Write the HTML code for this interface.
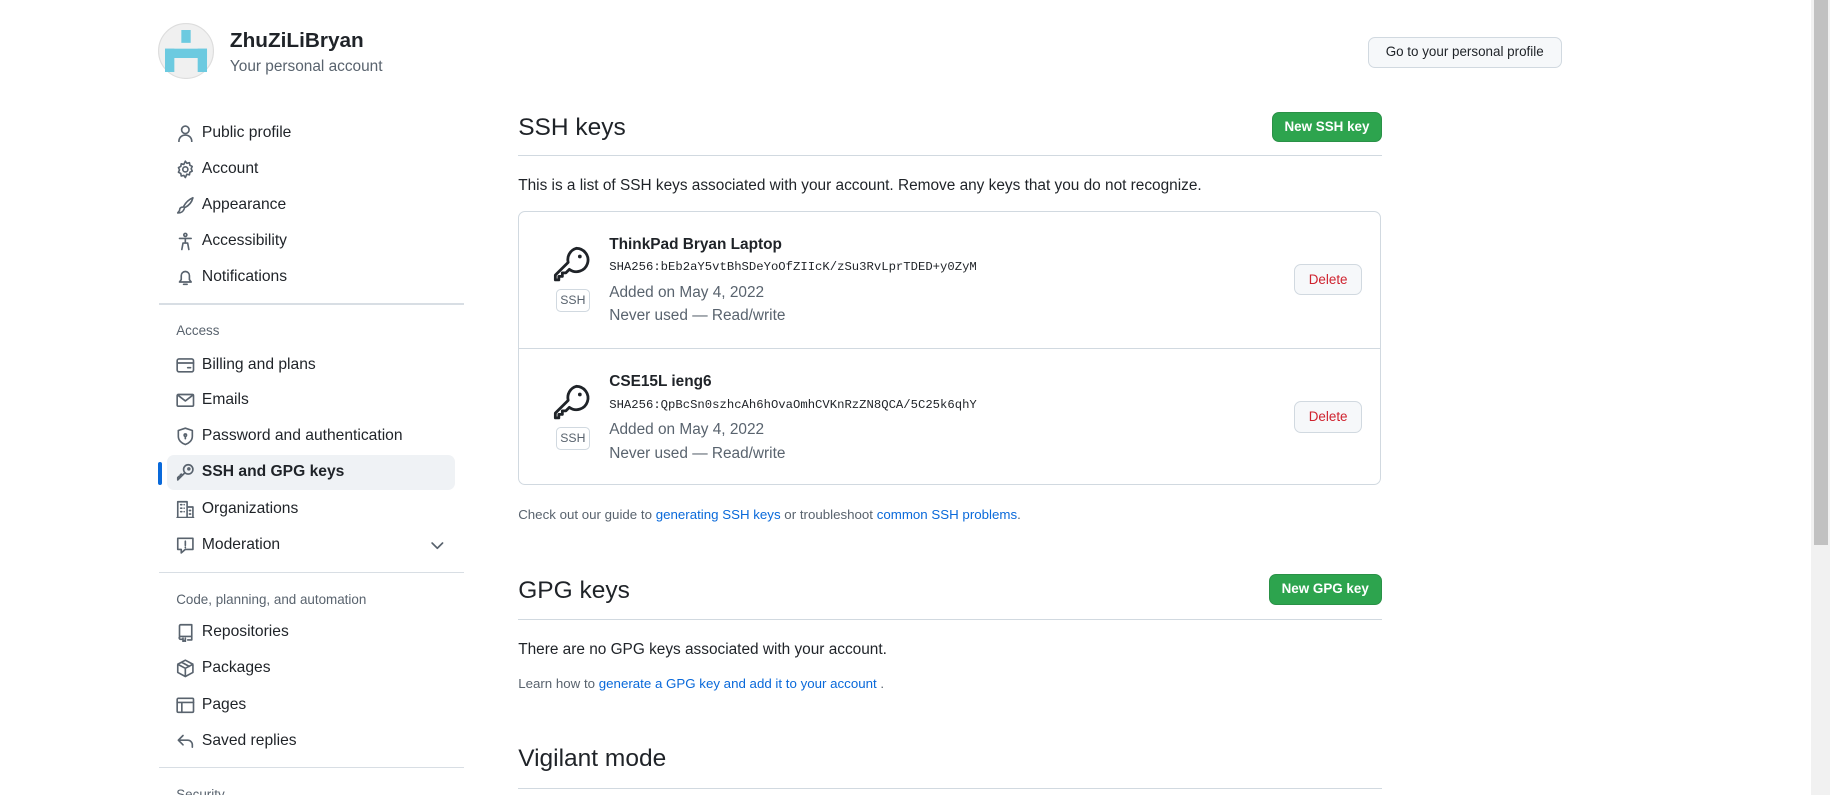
<!DOCTYPE html>
<html><head><meta charset="utf-8"><style>
html,body{margin:0;padding:0;background:#fff;overflow:hidden}
body{width:1830px;height:795px}
#r{zoom:1.16709;width:1568px;height:681px;position:relative;font-family:"Liberation Sans",sans-serif;color:#1f2328}
.a{position:absolute;white-space:nowrap}
.ic{position:absolute;width:16px;height:16px;fill:none;stroke:#59636e;stroke-width:1.4;stroke-linecap:round;stroke-linejoin:round}
.it{position:absolute;left:173px;font-size:13.4px;line-height:16px}
.sep{position:absolute;left:136px;width:262px;height:1px;background:#d8dee4}
.hd{position:absolute;left:151px;font-size:11.5px;color:#59636e}
.btn{position:absolute;border:1px solid #d1d9e0;border-radius:6px;background:#f6f8fa;font-size:11.5px;text-align:center;box-sizing:border-box}
.g{position:absolute;background:#2da44e;border:1px solid #2a9147;color:#fff;font-weight:bold;font-size:11.5px;border-radius:6px;text-align:center;box-sizing:border-box}
.h2{position:absolute;left:444px;font-size:21px;line-height:28px}
.ln{position:absolute;left:444px;width:740px;height:1px;background:#d1d9e0}
.t{font-size:13.2px}
.mono{font-family:"Liberation Mono",monospace;font-size:10.5px}
a{color:#0969da;text-decoration:none}
</style></head><body><div id="r">
<svg class="a" style="left:135px;top:20px" width="48" height="48" viewBox="0 0 48 48"><circle cx="24" cy="24" r="23.5" fill="#f0f0f0" stroke="#ddd"/><rect x="20" y="6" width="8" height="11" fill="#6ccae0"/><rect x="6" y="22" width="36" height="8" fill="#6ccae0"/><rect x="6" y="22" width="8" height="20" fill="#6ccae0"/><rect x="34" y="22" width="8" height="20" fill="#6ccae0"/></svg>
<div class="a" style="left:197px;top:25px;font-size:17.8px;font-weight:bold">ZhuZiLiBryan</div>
<div class="a" style="left:197px;top:50px;font-size:13.2px;color:#59636e">Your personal account</div>
<div class="btn" style="left:1172px;top:32px;width:166px;height:26px;line-height:24px">Go to your personal profile</div>

<svg class="ic" style="left:151px;top:106px" viewBox="0 0 16 16"><circle cx="8" cy="5" r="3.2"/><path d="M2.5 15c0-3.5 2.5-5.5 5.5-5.5s5.5 2 5.5 5.5"/></svg>
<div class="it" style="top:106px">Public profile</div>
<svg class="ic" style="left:151px;top:137px" viewBox="0 0 16 16"><circle cx="8" cy="8" r="2.2"/><path d="M8 1l1.3 1.8 2.2-.5.4 2.2 2 1-.9 2 .9 2-2 1-.4 2.2-2.2-.5L8 15l-1.3-1.8-2.2.5-.4-2.2-2-1 .9-2-.9-2 2-1 .4-2.2 2.2.5z"/></svg>
<div class="it" style="top:137px">Account</div>
<svg class="ic" style="left:151px;top:168px" viewBox="0 0 16 16"><path d="M14.5 1.5C11 3 8 6 6.5 9l1 1c3-1.5 6-4.5 7-8.5zM6 9.5c-2 0-3 1-3 3l-1.5 2c2.5 0 4.5-.5 5.5-3.5"/></svg>
<div class="it" style="top:168px">Appearance</div>
<svg class="ic" style="left:151px;top:199px" viewBox="0 0 16 16"><circle cx="8" cy="2.5" r="1.3"/><path d="M3 5.5h10M8 5.5v4M5 15l1-5.5h4l1 5.5"/></svg>
<div class="it" style="top:199px">Accessibility</div>
<svg class="ic" style="left:151px;top:230px" viewBox="0 0 16 16"><path d="M3 12h10l-1.5-2V6.5a3.5 3.5 0 0 0-7 0V10zM6.5 14h3"/></svg>
<div class="it" style="top:230px">Notifications</div>
<div class="sep" style="top:260px"></div>
<div class="hd" style="top:277px">Access</div>
<svg class="ic" style="left:151px;top:305px" viewBox="0 0 16 16"><rect x="1" y="2.5" width="14" height="11" rx="1.5"/><path d="M1 6h14M10 10h2.5"/></svg>
<div class="it" style="top:305px">Billing and plans</div>
<svg class="ic" style="left:151px;top:335px" viewBox="0 0 16 16"><rect x="1" y="3" width="14" height="10" rx="1"/><path d="M1.5 3.5L8 8.5l6.5-5"/></svg>
<div class="it" style="top:335px">Emails</div>
<svg class="ic" style="left:151px;top:366px" viewBox="0 0 16 16"><path d="M8 1l6 2v5c0 3.5-3 6-6 7-3-1-6-3.5-6-7V3z"/><circle cx="8" cy="7" r="1"/><path d="M8 8v2"/></svg>
<div class="it" style="top:366px">Password and authentication</div>
<div class="a" style="left:143px;top:390px;width:247px;height:30px;background:#eff2f5;border-radius:6px"></div>
<div class="a" style="left:135px;top:396px;width:4px;height:20px;background:#0969da;border-radius:3px"></div>
<svg class="ic" style="left:151px;top:397px" viewBox="0 0 16 16"><circle cx="10.5" cy="5.5" r="4"/><circle cx="11" cy="5" r=".8"/><path d="M7.5 8.5L1.5 14.5v-2l1-1 1 1 1-1-1-1 1-1 1 1 1.5-1.5"/></svg>
<div class="it" style="top:397px;font-weight:bold">SSH and GPG keys</div>
<svg class="ic" style="left:151px;top:428px" viewBox="0 0 16 16"><path d="M1.5 15V1.5h8V15M9.5 6h5v9M1 15h14M4 4h1M7 4h0M4 7h1M7 7h0M4 10h1M7 10h0M11.5 9h1M11.5 12h1"/></svg>
<div class="it" style="top:428px">Organizations</div>
<svg class="ic" style="left:151px;top:459px" viewBox="0 0 16 16"><path d="M1.5 2h13v9.5H8L4.5 14.5v-3h-3z"/><path d="M8 4.5v3.5M8 9.5v.5"/></svg>
<div class="it" style="top:459px">Moderation</div>
<svg class="ic" style="left:367px;top:459px" viewBox="0 0 16 16"><path d="M3.5 6l4.5 4.5L12.5 6"/></svg>
<div class="sep" style="top:490px"></div>
<div class="hd" style="top:507px">Code, planning, and automation</div>
<svg class="ic" style="left:151px;top:534px" viewBox="0 0 16 16"><path d="M3 13V2.5A1 1 0 0 1 4 1.5h9.5v10H4a1 1 0 0 0 0 2.5h1.5M13.5 11.5V14.5H10M6 13v3l1-1 1 1v-3"/></svg>
<div class="it" style="top:534px">Repositories</div>
<svg class="ic" style="left:151px;top:565px" viewBox="0 0 16 16"><path d="M8 1l6.5 3.5v7L8 15l-6.5-3.5v-7zM1.5 4.5L8 8l6.5-3.5M8 8v7M4.8 2.8l6.5 3.5"/></svg>
<div class="it" style="top:565px">Packages</div>
<svg class="ic" style="left:151px;top:596px" viewBox="0 0 16 16"><rect x="1" y="2" width="14" height="12" rx="1"/><path d="M1 5.5h14M5 5.5v8.5"/></svg>
<div class="it" style="top:596px">Pages</div>
<svg class="ic" style="left:151px;top:627px" viewBox="0 0 16 16"><path d="M6 3L2 7l4 4M2 7h8a4 4 0 0 1 4 4v2"/></svg>
<div class="it" style="top:627px">Saved replies</div>
<div class="sep" style="top:657px"></div>
<div class="hd" style="top:674px">Security</div>

<div class="h2" style="top:96px">SSH keys</div>
<div class="g" style="left:1090px;top:96px;width:94px;height:26px;line-height:24px">New SSH key</div>
<div class="ln" style="top:133px"></div>
<div class="a t" style="left:444px;top:152px">This is a list of SSH keys associated with your account. Remove any keys that you do not recognize.</div>
<div class="a" style="left:444px;top:181px;width:738px;height:233px;border:1px solid #d1d9e0;border-radius:6px"></div>
<div class="a" style="left:445px;top:298px;width:738px;height:1px;background:#d1d9e0"></div>

<svg class="a" style="left:474px;top:211px" width="32" height="32" viewBox="0 0 32 32" fill="none" stroke="#1f2328" stroke-width="2.4" stroke-linejoin="round"><path d="M20 2a10 10 0 1 1-6 18l-3 3h-3v3h-3v3H2v-4l11-11A10 10 0 0 1 20 2z"/><circle cx="23" cy="9" r="1.6" fill="#1f2328" stroke="none"/></svg>
<div class="a" style="left:476px;top:248px;width:28px;height:18px;border:1px solid #d1d9e0;border-radius:4px;font-size:10.5px;line-height:18px;text-align:center;color:#59636e">SSH</div>
<div class="a" style="left:522px;top:202px;font-size:13.2px;font-weight:bold">ThinkPad Bryan Laptop</div>
<div class="a mono" style="left:522px;top:223px">SHA256:bEb2aY5vtBhSDeYoOfZIIcK/zSu3RvLprTDED+y0ZyM</div>
<div class="a t" style="left:522px;top:243px;color:#59636e">Added on May 4, 2022</div>
<div class="a t" style="left:522px;top:263px;color:#59636e">Never used — Read/write</div>
<div class="btn" style="left:1109px;top:226px;width:58px;height:27px;line-height:25px;color:#cf222e">Delete</div>

<svg class="a" style="left:474px;top:329px" width="32" height="32" viewBox="0 0 32 32" fill="none" stroke="#1f2328" stroke-width="2.4" stroke-linejoin="round"><path d="M20 2a10 10 0 1 1-6 18l-3 3h-3v3h-3v3H2v-4l11-11A10 10 0 0 1 20 2z"/><circle cx="23" cy="9" r="1.6" fill="#1f2328" stroke="none"/></svg>
<div class="a" style="left:476px;top:366px;width:28px;height:18px;border:1px solid #d1d9e0;border-radius:4px;font-size:10.5px;line-height:18px;text-align:center;color:#59636e">SSH</div>
<div class="a" style="left:522px;top:320px;font-size:13.2px;font-weight:bold">CSE15L ieng6</div>
<div class="a mono" style="left:522px;top:341px">SHA256:QpBcSn0szhcAh6hOvaOmhCVKnRzZN8QCA/5C25k6qhY</div>
<div class="a t" style="left:522px;top:361px;color:#59636e">Added on May 4, 2022</div>
<div class="a t" style="left:522px;top:381px;color:#59636e">Never used — Read/write</div>
<div class="btn" style="left:1109px;top:344px;width:58px;height:27px;line-height:25px;color:#cf222e">Delete</div>

<div class="a" style="left:444px;top:434px;font-size:11.4px;color:#59636e">Check out our guide to <a>generating SSH keys</a> or troubleshoot <a>common SSH problems</a>.</div>

<div class="h2" style="top:493px">GPG keys</div>
<div class="g" style="left:1087px;top:492px;width:97px;height:26px;line-height:24px">New GPG key</div>
<div class="ln" style="top:530px"></div>
<div class="a t" style="left:444px;top:549px">There are no GPG keys associated with your account.</div>
<div class="a" style="left:444px;top:579px;font-size:11.4px;color:#59636e">Learn how to <a>generate a GPG key and add it to your account</a> .</div>
<div class="h2" style="top:637px">Vigilant mode</div>
<div class="ln" style="top:675px"></div>

<div class="a" style="left:1552px;top:0;width:16px;height:681px;background:#f1f1f1"></div>
<div class="a" style="left:1554px;top:0;width:12px;height:467px;background:#c1c1c1"></div>
</div></body></html>
